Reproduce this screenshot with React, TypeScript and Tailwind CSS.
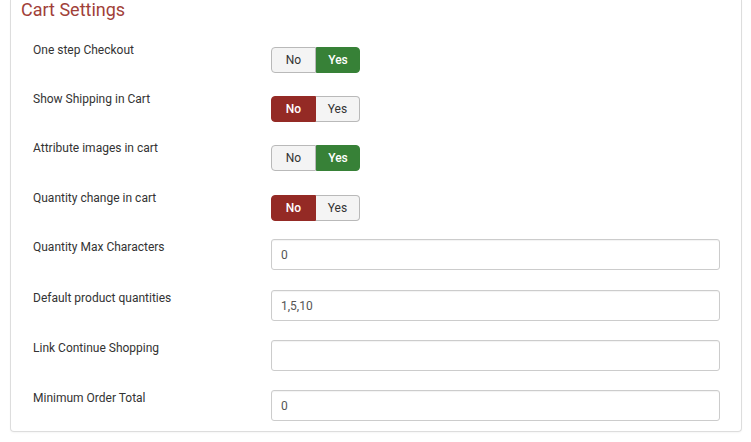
import React from "react";

const font = { fontFamily: "Roboto, 'Liberation Sans', Arial, sans-serif" };

function Toggle({ value }: { value: "yes" | "no" }) {
  const yesActive = value === "yes";
  return (
    <div className="flex h-[26px] w-[89px] mt-[6px] text-[12px] leading-[24px]">
      <div
        className={
          yesActive
            ? "w-[45px] h-[26px] flex items-center justify-center rounded-l-[4px] border border-[#b9b9b9] bg-[#f4f4f4] text-[#333]"
            : "w-[45px] h-[26px] flex items-center justify-center rounded-l-[4px] border border-[#942a25] bg-[#942a25] text-white font-medium"
        }
      >
        No
      </div>
      <div
        className={
          yesActive
            ? "w-[44px] h-[26px] flex items-center justify-center rounded-r-[4px] border border-[#378137] bg-[#378137] text-white font-medium"
            : "w-[44px] h-[26px] flex items-center justify-center rounded-r-[4px] border border-l-0 border-[#b9b9b9] bg-[#f4f4f4] text-[#333]"
        }
      >
        Yes
      </div>
    </div>
  );
}

function Input({ value }: { value: string }) {
  return (
    <div className="mt-[1px] h-[31px] w-[449px] rounded-[3px] border border-[#cccccc] bg-white shadow-[inset_0_1px_1px_rgba(0,0,0,0.05)] flex items-center pl-[9px] text-[12px] text-[#555]">
      {value}
    </div>
  );
}

function Row({
  label,
  children,
  mb,
}: {
  label: string;
  children: React.ReactNode;
  mb: string;
}) {
  return (
    <div className={"flex items-start " + mb}>
      <div className="w-[260px] shrink-0 pl-[22px] text-[12px] leading-[18px] text-[#333]">
        {label}
      </div>
      {children}
    </div>
  );
}

export default function App() {
  return (
    <div className="w-[751px] h-[442px] bg-white" style={font}>
      <div className="ml-[10px] w-[732px] border-x border-b border-[#dddddd] rounded-b-[4px] shadow-[0_1px_2px_rgba(0,0,0,0.04)] pb-[10px]">
        <div className="pl-[10px] text-[18px] leading-[20px] text-[#a13f39] mb-[21px]">
          Cart Settings
        </div>
        <Row label="One step Checkout" mb="mb-[17px]">
          <Toggle value="yes" />
        </Row>
        <Row label="Show Shipping in Cart" mb="mb-[17px]">
          <Toggle value="no" />
        </Row>
        <Row label="Attribute images in cart" mb="mb-[18px]">
          <Toggle value="yes" />
        </Row>
        <Row label="Quantity change in cart" mb="mb-[17px]">
          <Toggle value="no" />
        </Row>
        <Row label="Quantity Max Characters" mb="mb-[19px]">
          <Input value="0" />
        </Row>
        <Row label="Default product quantities" mb="mb-[18px]">
          <Input value="1,5,10" />
        </Row>
        <Row label="Link Continue Shopping" mb="mb-[18px]">
          <Input value="" />
        </Row>
        <Row label="Minimum Order Total" mb="mb-0">
          <Input value="0" />
        </Row>
      </div>
    </div>
  );
}
